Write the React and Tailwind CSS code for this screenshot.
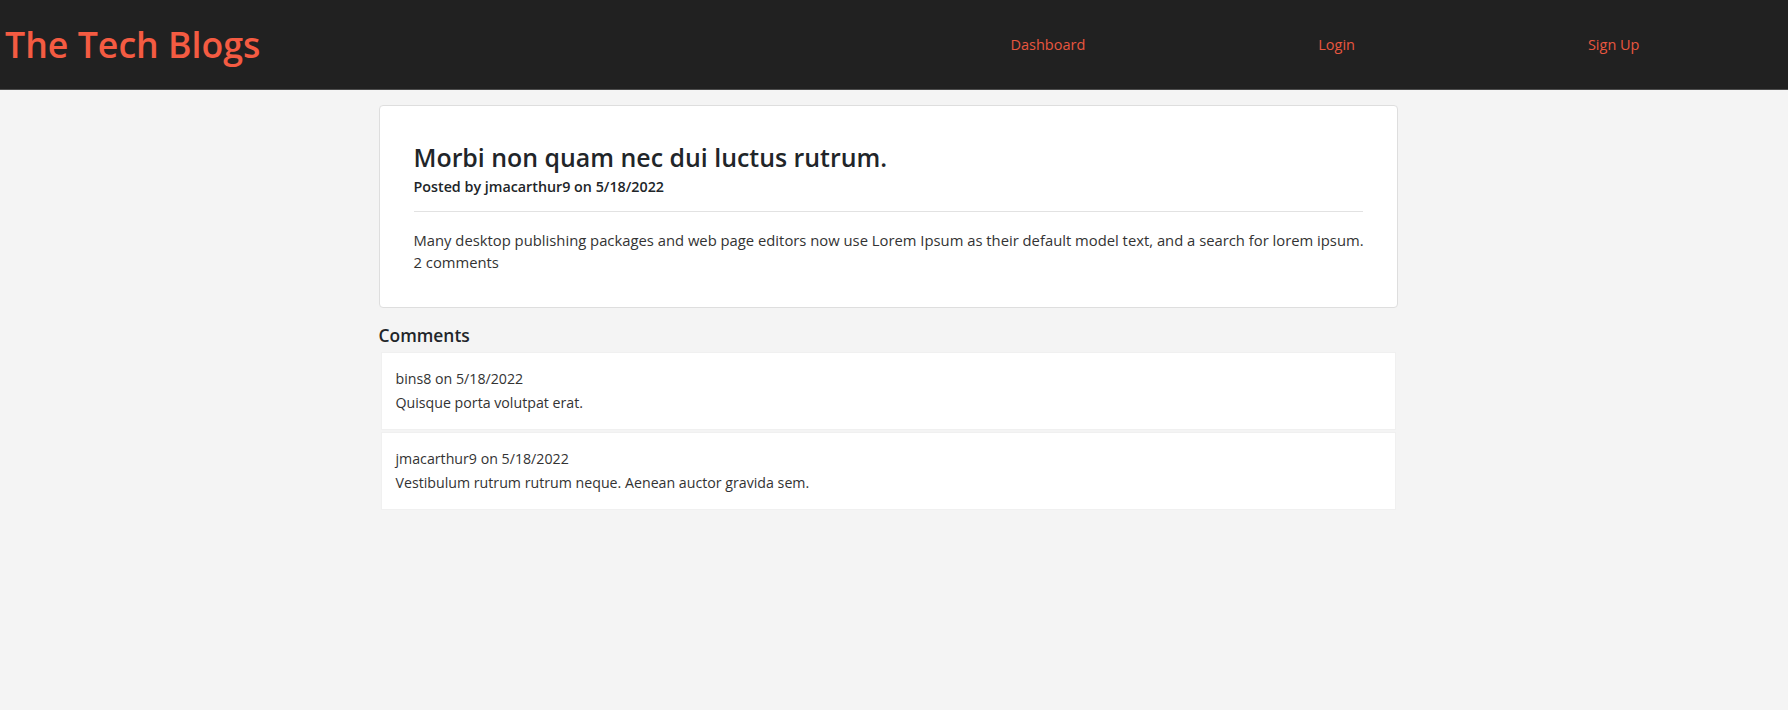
const POST = {
  title: 'Morbi non quam nec dui luctus rutrum.',
  author: 'jmacarthur9',
  date: '5/18/2022',
  body: 'Many desktop publishing packages and web page editors now use Lorem Ipsum as their default model text, and a search for lorem ipsum.',
}

const COMMENTS = [
  { user: 'bins8', date: '5/18/2022', text: 'Quisque porta volutpat erat.' },
  { user: 'jmacarthur9', date: '5/18/2022', text: 'Vestibulum rutrum rutrum neque. Aenean auctor gravida sem.' },
]

const NAV = ['Dashboard', 'Login', 'Sign Up']

export default function App() {
  return (
    <div
      className="min-h-[710px] bg-[#f4f4f4] text-[#212529]"
      style={{ fontFamily: '"Open Sans", "Noto Sans", sans-serif' }}
    >
      {/* header */}
      <header className="flex items-center h-[90px] bg-[#212121] border-b border-[#4d4d4d]">
        <div className="w-1/2 pl-[5px]">
          <h1 className="text-[35.7px] font-semibold text-[#f45b42] leading-none">The Tech Blogs</h1>
        </div>
        <nav className="w-1/2 flex justify-around pr-8">
          {NAV.map(n => (
            <a key={n} className="text-[14.5px] text-[#e8563f] cursor-pointer">{n}</a>
          ))}
        </nav>
      </header>

      <main className="w-[1031px] mx-auto pr-3 pt-[15px]">
        {/* post card */}
        <article className="bg-white border border-[#dedede] rounded-[4px] px-[34px] pt-[33px] pb-[34px]">
          <h2 className="text-[24.9px] font-semibold leading-[36px]">{POST.title}</h2>
          <p className="mt-[1px] text-[14.3px] font-semibold leading-[22px]">
            Posted by {POST.author} on {POST.date}
          </p>
          <hr className="mt-[13px] mb-[17px] border-[#e2e2e2]" />
          <p className="text-[14.8px] leading-[22px] text-[#333] whitespace-nowrap">{POST.body}</p>
          <p className="text-[14.8px] leading-[22px] text-[#333]">{COMMENTS.length} comments</p>
        </article>

        {/* comments */}
        <h3 className="mt-[14px] text-[17.4px] font-semibold leading-[26px]">Comments</h3>
        <div className="mt-[4px] flex flex-col gap-[2px] px-[2px]">
          {COMMENTS.map((c, i) => (
            <div key={i} className="bg-white border border-[#f0f0f0] px-[14px] pt-[14px] pb-[14px] text-[14.2px] leading-[24px] text-[#333]">
              <p>{c.user} on {c.date}</p>
              <p>{c.text}</p>
            </div>
          ))}
        </div>
      </main>
    </div>
  )
}
